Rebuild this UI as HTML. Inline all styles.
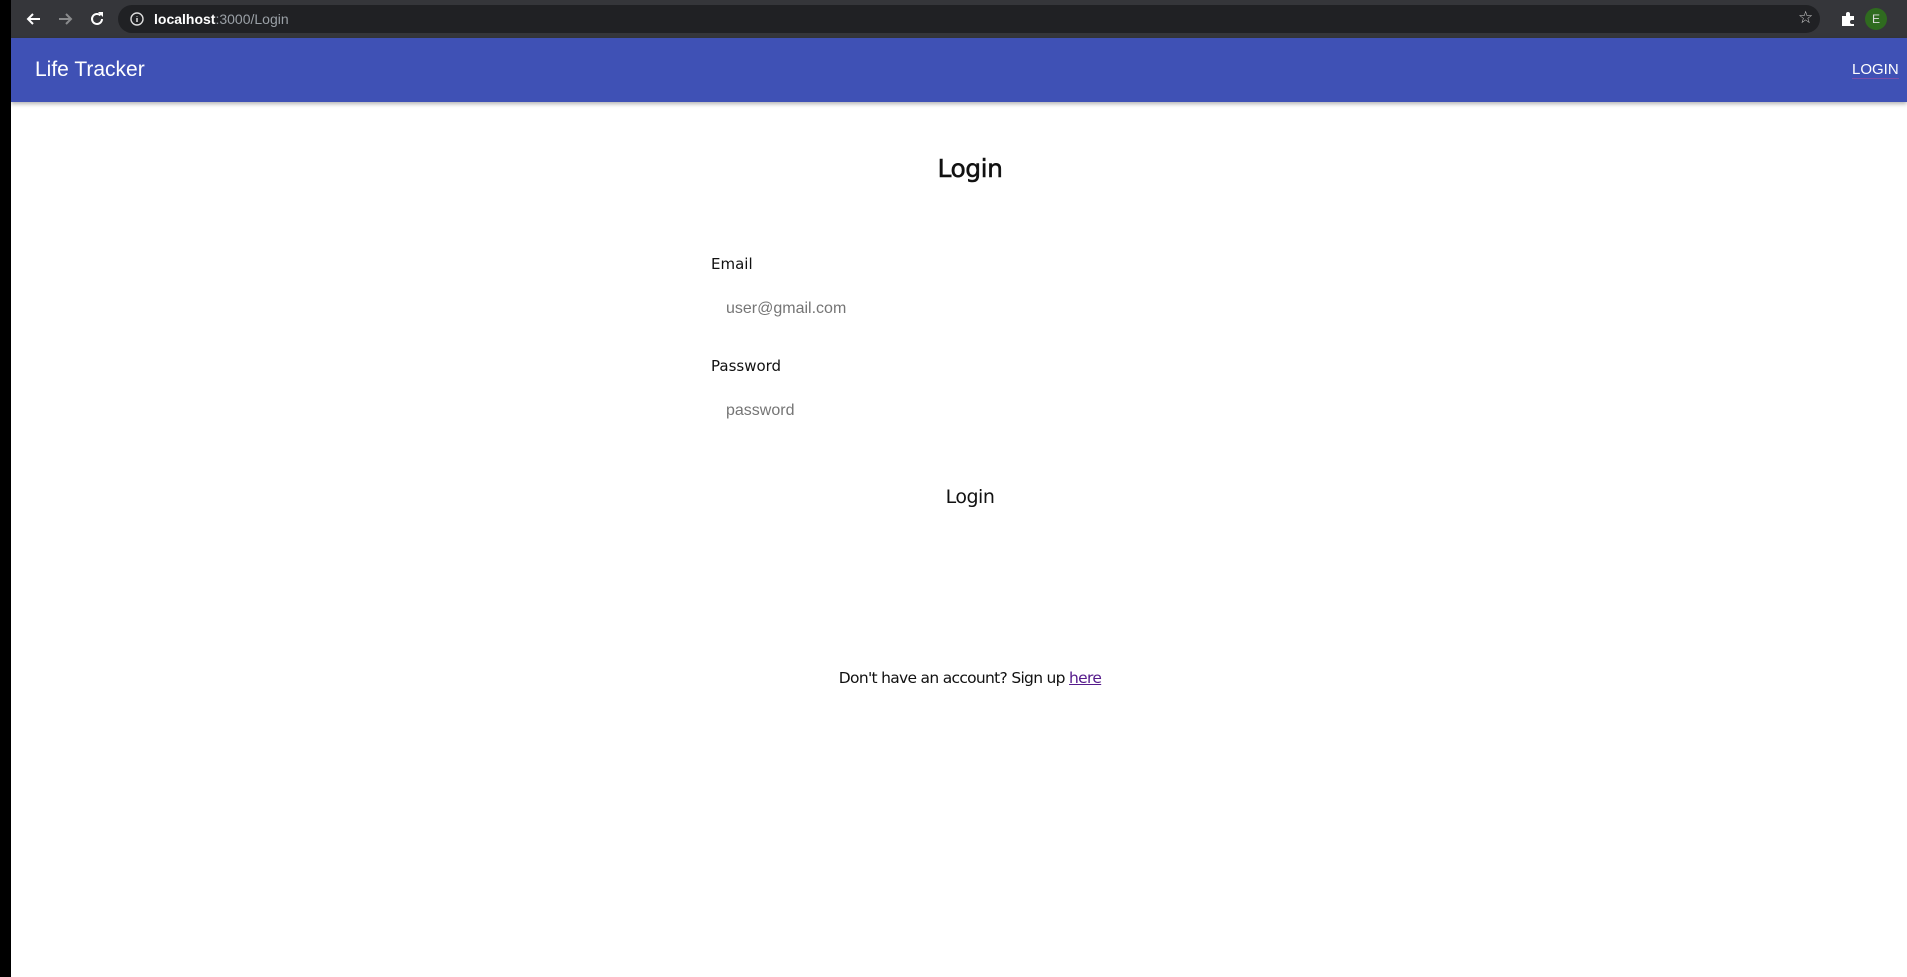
<!DOCTYPE html>
<html><head><meta charset="utf-8"><style>
*{margin:0;padding:0;box-sizing:border-box}
body{width:1907px;height:977px;background:#fff;position:relative;overflow:hidden;font-family:"Liberation Sans",sans-serif}
.black{position:absolute;left:0;top:0;width:11px;height:977px;background:#000}
.chrome{position:absolute;left:11px;top:0;right:0;height:38px;background:#35363a}
.url{position:absolute;left:107px;top:5px;width:1702px;height:28px;border-radius:14px;background:#202124}
.nav{position:absolute;left:11px;top:38px;right:0;height:64px;background:#3f51b5;box-shadow:0 2px 4px rgba(0,0,0,.3)}
.t{position:absolute;white-space:nowrap}
</style></head><body>
<div class="black"></div>
<div class="chrome">
<svg style="position:absolute;left:14px;top:10px" width="18" height="18" viewBox="0 0 18 18"><path d="M15 9H3M8 4L3 9l5 5" stroke="#fff" stroke-width="2" fill="none"/></svg>
<svg style="position:absolute;left:45px;top:10px" width="18" height="18" viewBox="0 0 18 18"><path d="M3 9h12M10 4l5 5-5 5" stroke="#8a8b8d" stroke-width="2" fill="none"/></svg>
<svg style="position:absolute;left:77px;top:10px" width="18" height="18" viewBox="0 0 18 18"><path d="M14 9a5 5 0 1 1-1.5-3.6" stroke="#fff" stroke-width="2" fill="none"/><path d="M10 2h5v5z" fill="#fff"/></svg>
<div class="url">
<svg style="position:absolute;left:12px;top:7px" width="14" height="14" viewBox="0 0 14 14"><circle cx="7" cy="7" r="6" stroke="#ddd" stroke-width="1.4" fill="none"/><path d="M7 6v4M7 4v.5" stroke="#ddd" stroke-width="1.5"/></svg>
<span class="t" style="left:36px;top:6px;font-size:14px;color:#fff;font-weight:bold">localhost<span style="color:#9aa0a6;font-weight:normal">:3000/Login</span></span>
<span class="t" style="left:1680px;top:3px;font-size:17px;color:#ccc">☆</span>
</div>
<svg style="position:absolute;left:1829px;top:11px" width="16" height="16" viewBox="0 0 16 16"><path d="M2 5h4V3a2 2 0 0 1 4 0v2h4v4h-2a2 2 0 0 0 0 4h2v2H2z" fill="#fff"/></svg>
<div style="position:absolute;left:1854px;top:8px;width:22px;height:22px;border-radius:50%;background:#2f6b1f;color:#ddd;font-size:12px;text-align:center;line-height:22px">E</div>
</div>
<div class="nav">
<span class="t" style="left:24px;top:20px;font-size:21px;color:#fff">Life Tracker</span>
<span class="t" style="left:1841px;top:23px;font-size:15px;color:#fff;border-bottom:1px solid #7b4fa8">LOGIN</span>
</div>
<div class="t" style="left:0;width:1940px;text-align:center;top:154px;font-size:25px;color:#111;font-family:'DejaVu Sans',sans-serif;letter-spacing:-0.5px;-webkit-text-stroke:0.5px #111">Login</div>
<div class="t" style="left:711px;top:255px;font-size:15px;color:#111;font-family:'DejaVu Sans',sans-serif">Email</div>
<div class="t" style="left:726px;top:300px;font-size:16px;color:#757575">user@gmail.com</div>
<div class="t" style="left:711px;top:357px;font-size:15px;color:#111;font-family:'DejaVu Sans',sans-serif">Password</div>
<div class="t" style="left:726px;top:402px;font-size:16px;color:#757575">password</div>
<div class="t" style="left:0;width:1940px;text-align:center;top:486px;font-size:19px;color:#111;font-family:'DejaVu Sans',sans-serif;letter-spacing:-0.5px">Login</div>
<div class="t" style="left:0;width:1940px;text-align:center;top:669px;font-size:15.5px;color:#111;font-family:'DejaVu Sans',sans-serif;letter-spacing:-0.7px">Don't have an account? Sign up <u style="color:#551a8b">here</u></div>
</body></html>
